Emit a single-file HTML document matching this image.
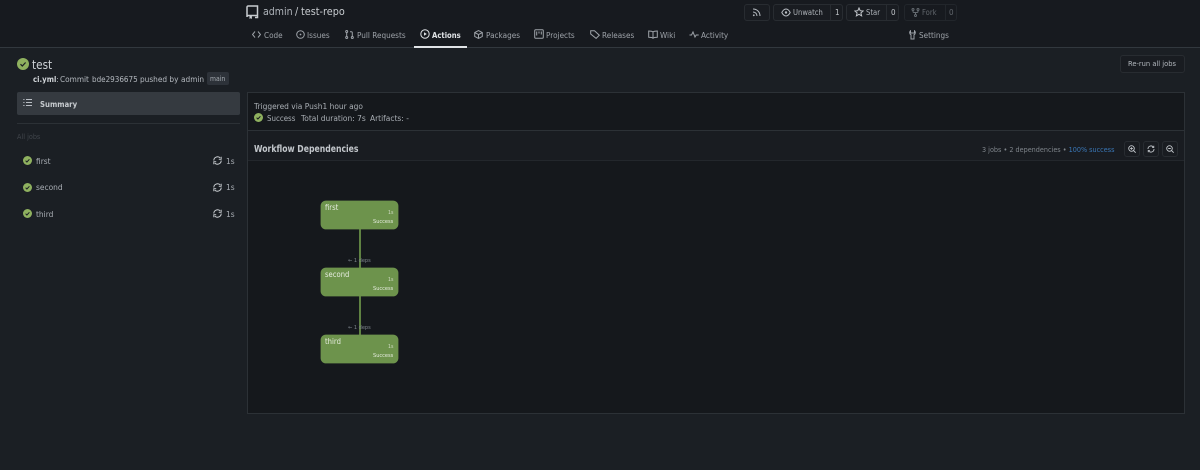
<!DOCTYPE html>
<html style="background:#1b1f24"><head><meta charset="utf-8"><style>
html,body{margin:0;padding:0;width:1200px;height:470px;overflow:hidden;}
body{position:relative;font-family:"DejaVu Sans","Liberation Sans",sans-serif;font-size:8.2px;color:#b4b9bf;background:#1b1f24;filter:blur(.3px);}
.t{position:absolute;white-space:nowrap;line-height:12px;transform:scaleX(.9);transform-origin:0 50%;}
.bd{font-weight:bold;transform:scaleX(.85);}
.b{position:absolute;box-sizing:border-box;}
svg{position:absolute;fill:none;stroke:currentColor;stroke-width:1;}
.nav{color:#9ea3a9;font-size:8.1px;}
.btn{border:1px solid #282c31;border-radius:3px;background:#191c21;}
.node{position:absolute;left:321px;width:77px;height:28px;border-radius:5px;background:#6d934c;box-shadow:0 0 0 .4px #6d934c;}
.dep{font-size:5.600px;color:#7d848b;}
.nm{font-size:7.600px;color:#e6ecdf;left:325px;}
.du{font-size:5.200px;color:#cfdac2;left:388px;}
.su{font-size:5.600px;color:#e6ecdf;left:373px;}
.j{font-size:8.300px;color:#a9aeb4;}
</style></head><body>
<div class="b" style="left:0;top:0;width:1200px;background:#171a1f;border-bottom:1px solid #32383e;height:48px"></div>

<svg style="left:246px;top:5px;color:#c8ccd0;stroke-width:1.500" width="13" height="14" viewBox="0 0 13 14"><path d="M11.500 10.500H2.200A1.400 1.400 0 0 0 1 12V2.200C1 1.500 1.600 1 2.200 1H11.500V12.500H9"/><path d="M3.500 11v3l1.200-.8 1.200.8v-3" fill="currentColor" stroke="none"/></svg>
<div class="t" style="left:263px;top:6px;font-size:10.500px;color:#aeb3b9">admin</div>
<div class="t" style="left:295px;top:6px;font-size:10.500px;color:#c8ccd0">/</div>
<div class="t" style="left:301px;top:6px;font-size:10.500px;color:#c8ccd0;transform:scaleX(.92)">test-repo</div>

<!-- top buttons -->
<div class="b btn" style="left:744px;top:4px;width:26px;height:17px"></div>
<svg style="left:752px;top:8px;color:#b4b9bf" width="9" height="9" viewBox="0 0 9 9"><path d="M1 1c4 0 7 3 7 7M1 4c2.300 0 4 1.700 4 4"/><circle cx="1.800" cy="7.300" r=".9" fill="currentColor" stroke="none"/></svg>
<div class="b btn" style="left:773px;top:4px;width:70px;height:17px"></div>
<div class="b" style="left:830px;top:4px;width:1px;height:17px;background:#282c31"></div>
<svg style="left:781px;top:8px;color:#b9bec4" width="10" height="9" viewBox="0 0 10 9"><path d="M.8 4.500C2 2.200 3.400 1 5 1s3 1.200 4.200 3.500C8 6.800 6.600 8 5 8S2 6.800 .8 4.500Z"/><circle cx="5" cy="4.500" r="1.200" fill="currentColor" stroke="none"/></svg>
<div class="t nav" style="left:793px;top:7px;font-size:7.600px;color:#aeb3b9">Unwatch</div>
<div class="t" style="left:835px;top:7px;font-size:8px;color:#c2c6cb">1</div>
<div class="b btn" style="left:846px;top:4px;width:53px;height:17px"></div>
<div class="b" style="left:886px;top:4px;width:1px;height:17px;background:#282c31"></div>
<svg style="left:854px;top:7px;color:#c2c6cb" width="10" height="10" viewBox="0 0 10 10"><path d="M5 1l1.200 2.700 2.900.3-2.200 1.900.7 2.900L5 7.300 2.400 8.800l.7-2.900L.9 4l2.900-.3Z"/></svg>
<div class="t nav" style="left:866px;top:7px;font-size:7.600px;color:#aeb3b9">Star</div>
<div class="t" style="left:891px;top:7px;font-size:8px;color:#c2c6cb">0</div>
<div class="b" style="left:904px;top:4px;width:53px;height:17px;border:1px solid #22262b;border-radius:3px"></div>
<div class="b" style="left:945px;top:4px;width:1px;height:17px;background:#22262b"></div>
<svg style="left:911px;top:8px;color:#666c72" width="9" height="9" viewBox="0 0 9 9"><circle cx="2" cy="1.500" r="1"/><circle cx="7" cy="1.500" r="1"/><circle cx="4.500" cy="7.500" r="1"/><path d="M2 2.500v1c0 .7.500 1 1 1h3c.5 0 1-.3 1-1v-1M4.500 4.500v2"/></svg>
<div class="t nav" style="left:922px;top:7px;font-size:7.600px;color:#62676d">Fork</div>
<div class="t" style="left:949px;top:7px;font-size:8px;color:#62676d">0</div>

<!-- nav -->
<svg style="left:252px;top:30px;color:#9ea3a9" width="9" height="9" viewBox="0 0 9 9"><path d="M3 1.500L.5 4.500 3 7.500M6 1.500l2.500 3L6 7.500"/></svg>
<div class="t nav" style="left:264px;top:29px">Code</div>
<svg style="left:296px;top:30px;color:#9ea3a9" width="9" height="9" viewBox="0 0 9 9"><circle cx="4.500" cy="4.500" r="3.800"/><circle cx="4.500" cy="4.500" r=".9" fill="currentColor" stroke="none"/></svg>
<div class="t nav" style="left:307px;top:29px">Issues</div>
<svg style="left:345px;top:30px;color:#9ea3a9" width="9" height="9" viewBox="0 0 9 9"><circle cx="1.700" cy="1.500" r="1"/><circle cx="1.700" cy="7.500" r="1"/><circle cx="7.300" cy="7.500" r="1"/><path d="M1.700 2.500v4M7.300 6.500V2.800c0-.7-.4-1-1-1H5"/></svg>
<div class="t nav" style="left:357px;top:29px">Pull Requests</div>
<svg style="left:420px;top:29px;color:#e0e3e6" width="10" height="10" viewBox="0 0 10 10"><circle cx="5" cy="5" r="4.200"/><path d="M4 3.200v3.600L6.800 5Z" fill="currentColor" stroke="none"/></svg>
<div class="t nav bd" style="left:432px;top:29px;color:#e0e3e6">Actions</div>
<div class="b" style="left:414px;top:46px;width:53px;height:2px;background:#e0e3e6"></div>
<svg style="left:474px;top:30px;color:#9ea3a9" width="9" height="9" viewBox="0 0 9 9"><path d="M4.500.6l3.800 2v3.800l-3.800 2-3.800-2V2.600ZM.7 2.600l3.800 2 3.800-2M4.500 4.600v3.800"/></svg>
<div class="t nav" style="left:486px;top:29px">Packages</div>
<svg style="left:534px;top:29px;color:#9ea3a9" width="10" height="10" viewBox="0 0 10 10"><rect x=".7" y=".7" width="8.600" height="8.600" rx="1"/><path d="M2.700 2.500v4M5 2.500v2M7.300 2.500v3"/></svg>
<div class="t nav" style="left:546px;top:29px">Projects</div>
<svg style="left:590px;top:30px;color:#9ea3a9" width="10" height="9" viewBox="0 0 10 9"><path d="M.7.700h3.800l4.800 4.500-3.200 3.200L.7 4Z"/></svg>
<div class="t nav" style="left:602px;top:29px">Releases</div>
<svg style="left:648px;top:30px;color:#9ea3a9" width="10" height="9" viewBox="0 0 10 9"><path d="M5 2C4 1 2.500 1 .7 1v6.300c2 0 3.300 0 4.300 1 1-1 2.300-1 4.300-1V1C7.500 1 6 1 5 2ZM5 2v6"/></svg>
<div class="t nav" style="left:660px;top:29px">Wiki</div>
<svg style="left:689px;top:30px;color:#9ea3a9" width="10" height="9" viewBox="0 0 10 9"><path d="M.5 5h2l1.500-3 2 5 1.200-2h2.500"/></svg>
<div class="t nav" style="left:701px;top:29px">Activity</div>
<svg style="left:908px;top:30px;color:#9ea3a9" width="9" height="10" viewBox="0 0 9 10"><path d="M2.500.8C1.200 2 1.500 4 3 4.800V9h3V4.800C7.500 4 7.800 2 6.500.8V3H2.500Z"/></svg>
<div class="t nav" style="left:919px;top:29px">Settings</div>

<!-- title -->
<svg style="left:17px;top:58px;color:#1b1f24;stroke-width:1.200" width="12" height="12" viewBox="0 0 12 12"><circle cx="6" cy="6" r="6" fill="#8fb15f" stroke="none"/><path d="M3.500 6.200l1.800 1.800 3.300-3.500"/></svg>
<div class="t" style="left:32px;top:58px;font-size:12.500px;color:#cfd3d7;line-height:13px;transform:scaleX(.84)">test</div>
<div class="t bd" style="left:33px;top:73px;font-size:8.200px;color:#d0d4d8">ci.yml<span style="font-weight:normal;color:#b4b9bf">:</span></div>
<div class="t" style="left:60px;top:73px;font-size:8.200px">Commit</div>
<div class="t" style="left:92px;top:73px;font-size:8.200px;transform:scaleX(.88)">bde2936675</div>
<div class="t" style="left:140px;top:73px;font-size:8.200px">pushed by</div>
<div class="t" style="left:181px;top:73px;font-size:8.200px">admin</div>
<div class="b" style="left:207px;top:72px;width:22px;height:13px;background:#2d3239;border-radius:2px"></div>
<div class="t" style="left:210px;top:73px;font-size:6.800px;color:#a7adb3">main</div>

<div class="b btn" style="left:1120px;top:55px;width:65px;height:18px"></div>
<div class="t" style="left:1128px;top:58px;font-size:7.300px;color:#b4b9bf;transform:scaleX(.92)">Re-run all jobs</div>

<!-- sidebar -->
<div class="b" style="left:17px;top:92px;width:223px;height:23px;background:#353a40;border-radius:2px"></div>
<svg style="left:23px;top:98px;color:#b9bec4" width="9" height="9" viewBox="0 0 9 9"><path d="M3 1.500h6M3 4.500h6M3 7.500h6M.3 1.500h1.200M.3 4.500h1.200M.3 7.500h1.200"/></svg>
<div class="t bd" style="left:40px;top:98px;font-size:8.200px;color:#c8ccd0">Summary</div>
<div class="b" style="left:17px;top:123px;width:223px;height:1px;background:#2c3136"></div>
<div class="t" style="left:17px;top:131px;font-size:7.200px;color:#40454b">All jobs</div>

<svg style="left:23px;top:156px;color:#1b1f24" width="9" height="9" viewBox="0 0 9 9"><circle cx="4.500" cy="4.500" r="4.500" fill="#8fb15f" stroke="none"/><path d="M2.600 4.700l1.300 1.300 2.500-2.700"/></svg>
<div class="t j" style="left:36px;top:155px">first</div>
<svg style="left:213px;top:156px;color:#c8ccd0" width="9" height="9" viewBox="0 0 9 9"><path d="M.8 4.500A3.700 3.700 0 0 1 7.300 2.100M8.200 4.500A3.700 3.700 0 0 1 1.700 6.900"/><path d="M8.200.8v2.500H5.800M.8 8.200V5.700h2.400" stroke-width=".9"/></svg>
<div class="t j" style="left:226px;top:155px">1s</div>

<svg style="left:23px;top:183px;color:#1b1f24" width="9" height="9" viewBox="0 0 9 9"><circle cx="4.500" cy="4.500" r="4.500" fill="#8fb15f" stroke="none"/><path d="M2.600 4.700l1.300 1.300 2.500-2.700"/></svg>
<div class="t j" style="left:36px;top:181px">second</div>
<svg style="left:213px;top:183px;color:#c8ccd0" width="9" height="9" viewBox="0 0 9 9"><path d="M.8 4.500A3.700 3.700 0 0 1 7.300 2.100M8.200 4.500A3.700 3.700 0 0 1 1.700 6.900"/><path d="M8.200.8v2.500H5.800M.8 8.200V5.700h2.400" stroke-width=".9"/></svg>
<div class="t j" style="left:226px;top:181px">1s</div>

<svg style="left:23px;top:209px;color:#1b1f24" width="9" height="9" viewBox="0 0 9 9"><circle cx="4.500" cy="4.500" r="4.500" fill="#8fb15f" stroke="none"/><path d="M2.600 4.700l1.300 1.300 2.500-2.700"/></svg>
<div class="t j" style="left:36px;top:208px">third</div>
<svg style="left:213px;top:209px;color:#c8ccd0" width="9" height="9" viewBox="0 0 9 9"><path d="M.8 4.500A3.700 3.700 0 0 1 7.300 2.100M8.200 4.500A3.700 3.700 0 0 1 1.700 6.900"/><path d="M8.200.8v2.500H5.800M.8 8.200V5.700h2.400" stroke-width=".9"/></svg>
<div class="t j" style="left:226px;top:208px">1s</div>

<!-- main panel -->
<div class="b" style="left:247px;top:92px;width:938px;height:322px;background:#15181c;border:1px solid #2c3136"></div>
<div class="b" style="left:248px;top:130px;width:936px;height:1px;background:#2c3136"></div>
<div class="b" style="left:248px;top:160px;width:936px;height:1px;background:#23272c"></div>
<div class="b" style="left:248px;top:131px;width:936px;height:29px;background:#191c21"></div>

<div class="t j" style="left:254px;top:100px">Triggered via Push1 hour ago</div>
<svg style="left:254px;top:113px;color:#15181c" width="9" height="9" viewBox="0 0 9 9"><circle cx="4.500" cy="4.500" r="4.500" fill="#8fb15f" stroke="none"/><path d="M2.600 4.700l1.300 1.300 2.500-2.700"/></svg>
<div class="t j" style="left:267px;top:112px;transform:scaleX(.85)">Success</div>
<div class="t j" style="left:301px;top:112px">Total duration: 7s</div>
<div class="t j" style="left:370px;top:112px">Artifacts: -</div>

<div class="t bd" style="left:254px;top:144px;font-size:9.300px;color:#c2c6cb;transform:scaleX(.83)">Workflow Dependencies</div>
<div class="t" style="left:982px;top:144px;font-size:7.200px;color:#7f858b">3 jobs • 2 dependencies • <span style="color:#3a78b8">100% success</span></div>

<div class="b btn" style="left:1124px;top:141px;width:16px;height:16px"></div>
<div class="b btn" style="left:1143px;top:141px;width:16px;height:16px"></div>
<div class="b btn" style="left:1162px;top:141px;width:16px;height:16px"></div>
<svg style="left:1128px;top:145px;color:#c2c6cb;stroke-width:.9" width="8" height="8" viewBox="0 0 8 8"><circle cx="3.500" cy="3.500" r="2.800"/><path d="M5.500 5.500L7.700 7.700M2.200 3.500h2.600M3.500 2.200v2.600"/></svg>
<svg style="left:1147px;top:145px;color:#c2c6cb;stroke-width:.9" width="8" height="8" viewBox="0 0 8 8"><path d="M1 4A3 3 0 0 1 6.300 2M7 4A3 3 0 0 1 1.700 6"/><path d="M6.800.8v1.800H5M1.200 7.200V5.400H3" stroke-width=".8"/></svg>
<svg style="left:1166px;top:145px;color:#c2c6cb;stroke-width:.9" width="8" height="8" viewBox="0 0 8 8"><circle cx="3.500" cy="3.500" r="2.800"/><path d="M5.500 5.500L7.700 7.700M2.200 3.500h2.600"/></svg>

<!-- graph -->
<div class="b" style="left:359px;top:229px;width:2px;height:106px;background:#5f8242"></div>
<div class="t dep" style="left:348px;top:255px">← 1 deps</div>
<div class="t dep" style="left:348px;top:322px">← 1 deps</div>

<div class="node" style="top:201px"></div>
<div class="t nm" style="top:202px">first</div>
<div class="t du" style="top:207px">1s</div>
<div class="t su" style="top:216px">Success</div>

<div class="node" style="top:268px"></div>
<div class="t nm" style="top:269px">second</div>
<div class="t du" style="top:274px">1s</div>
<div class="t su" style="top:283px">Success</div>

<div class="node" style="top:335px"></div>
<div class="t nm" style="top:336px">third</div>
<div class="t du" style="top:341px">1s</div>
<div class="t su" style="top:350px">Success</div>
</body></html>
